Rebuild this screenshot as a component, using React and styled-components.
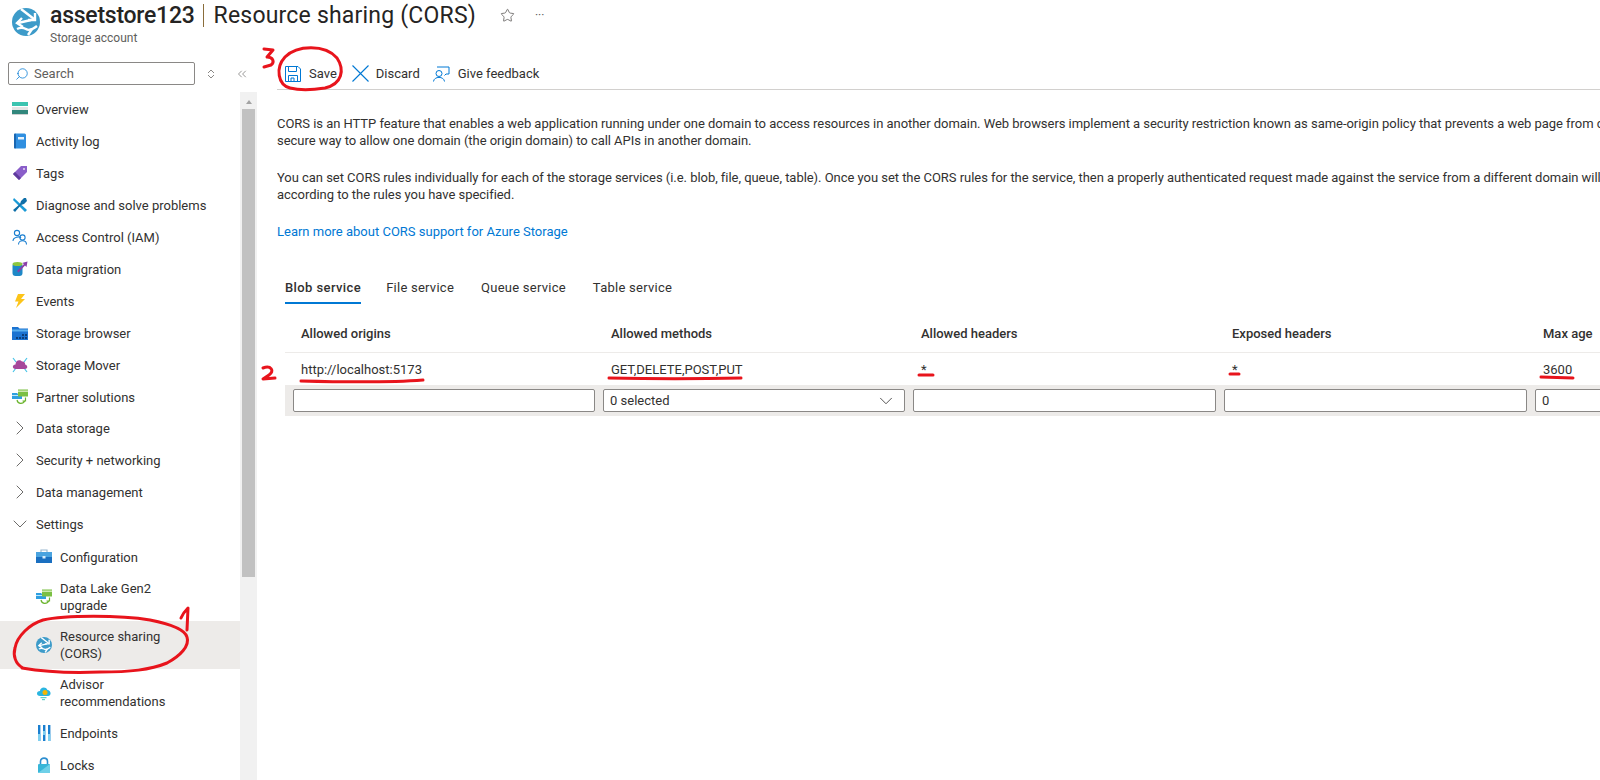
import React from 'react';
import styled, { createGlobalStyle } from 'styled-components';
import { ChevronRight, ChevronDown, ChevronsLeft, Star, Search as SearchGlyph } from 'lucide-react';

const Global = createGlobalStyle`
  html, body { margin: 0; padding: 0; height: 100%; background: #fff; overflow: hidden; }
  body { font-family: Roboto, "Liberation Sans", sans-serif; color: #323130; font-size: 13px; }
`;

const Page = styled.div`
  position: relative;
  width: 1600px;
  height: 780px;
  overflow: hidden;
`;
const Header = styled.header`
  display: flex;
  height: 52px;
  padding: 0 0 0 12px;
  gap: 10px;
`;
const LogoSlot = styled.div`
  padding-top: 8px;
`;
const HeaderText = styled.div`
  display: flex;
  flex-direction: column;
`;
const TitleRow = styled.div`
  display: flex;
  align-items: center;
  height: 30px;
  font-size: 23px;
  color: #252423;
`;
const TitleBold = styled.b`
  font-weight: 500;
  letter-spacing: -0.25px;
`;
const Divider = styled.span`
  width: 1px;
  height: 23px;
  margin: 0 10px 0 8px;
  background: #8a6d3b;
`;
const TitleRest = styled.span`
  letter-spacing: 0.2px;
`;
const HeaderTools = styled.span`
  display: flex;
  align-items: center;
  gap: 20px;
  margin-left: 24px;
  color: #605e5c;
`;
const Dots = styled.span`
  font-size: 12px;
  line-height: 10px;
`;
const Subtitle = styled.div`
  font-size: 12px;
  color: #605e5c;
  line-height: 16px;
`;
const Body = styled.div`
  display: flex;
`;
const Side = styled.aside`
  width: 277px;
  flex: none;
`;
const SearchRow = styled.div`
  display: flex;
  align-items: center;
  height: 40px;
  padding: 3px 0 0 8px;
  box-sizing: border-box;
`;
const SearchBox = styled.div`
  display: flex;
  align-items: center;
  gap: 5px;
  width: 187px;
  height: 23px;
  padding-left: 6px;
  box-sizing: border-box;
  border: 1px solid #8a8886;
  border-radius: 2px;
  color: #605e5c;
`;
const SideTools = styled.div`
  display: flex;
  align-items: center;
  gap: 20px;
  margin-left: 12px;
  color: #605e5c;
`;
const SideBody = styled.div`
  display: flex;
  height: 688px;
`;
const Nav = styled.nav`
  width: 240px;
  flex: none;
  padding-top: 1px;
`;
const NavItem = styled.div`
  display: flex;
  align-items: center;
  gap: 8px;
  min-height: ${p => (p.$tall ? 48 : 32)}px;
  padding-left: ${p => (p.$sub ? 36 : 12)}px;
  background: ${p => (p.$active ? '#edebe9' : 'transparent')};
  line-height: 17px;
  color: #323130;
`;
const Groups = styled.div`
  margin: -1px 0 1px;
`;
const IconSlot = styled.span`
  display: flex;
  justify-content: center;
  align-items: center;
  width: 16px;
  flex: none;
  svg { flex: none; }
`;
const NavIcon = styled.svg`
  width: 16px;
  height: 16px;
  flex: none;
`;
const Track = styled.div`
  width: 17px;
  flex: none;
  background: #f1f1f1;
  display: flex;
  flex-direction: column;
  align-items: center;
`;
const ScrollUp = styled.div`
  width: 0;
  height: 0;
  margin: 8px 0 5px;
  border-left: 3.5px solid transparent;
  border-right: 3.5px solid transparent;
  border-bottom: 4px solid #a3a3a3;
`;
const Thumb = styled.div`
  width: 13px;
  height: 468px;
  background: #c1c1c1;
`;
const Main = styled.main`
  flex: 1;
  min-width: 0;
  overflow: hidden;
`;
const Toolbar = styled.div`
  display: flex;
  align-items: center;
  height: 38px;
  padding: 6px 0 0 8px;
  box-sizing: border-box;
  gap: 15px;
  border-bottom: 1px solid #d2d0ce;
`;
const ToolButton = styled.span`
  display: flex;
  align-items: center;
  gap: ${p => p.$gap || 8}px;
  margin-right: ${p => p.$pull || 0}px;
  color: #323130;
`;
const Copy = styled.div`
  padding-top: 25px;
`;
const Intro = styled.p`
  margin: 0 0 20px;
  line-height: 17px;
  white-space: nowrap;
  letter-spacing: -0.04px;
`;
const LearnLink = styled.a`
  display: block;
  color: #0078d4;
  line-height: 17px;
`;
const Tabs = styled.div`
  display: flex;
  margin: 35px 0 0 8px;
  gap: 27px;
`;
const Tab = styled.div`
  height: 29px;
  line-height: 26px;
  box-sizing: border-box;
  font-weight: ${p => (p.$active ? 500 : 400)};
  letter-spacing: ${p => (p.$active ? 0.4 : 0.25)}px;
  margin-right: ${p => (p.$active ? -2 : 0)}px;
  border-bottom: 2px solid ${p => (p.$active ? '#0078d4' : 'transparent')};
`;
const Table = styled.div`
  margin: 10px 0 0 8px;
  width: 1400px;
`;
const Columns = styled.div`
  display: grid;
  grid-template-columns: 310px 310px 311px 311px 1fr;
  height: ${p => p.$h}px;
  box-sizing: border-box;
  align-items: center;
  background: ${p => p.$bg || 'transparent'};
  border-bottom: ${p => (p.$line ? '1px solid #edebe9' : 'none')};
`;
const HeadCell = styled.div`
  padding-left: 16px;
  font-weight: 500;
`;
const Cell = styled.div`
  padding-left: 16px;
`;
const InputCell = styled.div`
  padding-left: 8px;
`;
const FakeInput = styled.div`
  display: flex;
  align-items: center;
  justify-content: space-between;
  height: 23px;
  box-sizing: border-box;
  padding: 0 7px 0 6px;
  background: #fff;
  border: 1px solid #8a8886;
  border-radius: 2px;
`;
const Ink = styled.svg`
  position: absolute;
  left: 0;
  top: 0;
  width: 1600px;
  height: 780px;
  pointer-events: none;
`;

const Cors = ({ size = 16 }) => (
  <svg width={size} height={size} viewBox="0 0 28 28">
    <circle cx="14" cy="14" r="14" fill="#3d9bc9" />
    <g fill="none" stroke="#fff" strokeWidth="2.4" strokeLinejoin="miter">
      <path d="M9 1 L22 11" />
      <path d="M23 5 L23 12 L16 12" />
      <path d="M19 12 L6 15" />
      <path d="M10 10 L5 15 L11 19" />
      <path d="M5 21 C9 19 12 20 14 21 C17 23 20 22 25 18" />
      <path d="M16 27 L20 21" />
    </g>
  </svg>
);

const icons = {
  overview: (
    <NavIcon viewBox="0 0 16 16">
      <rect y="1" width="16" height="4" fill="#3cc4b0" />
      <rect y="6" width="16" height="3" fill="#e4e4e4" />
      <rect y="9" width="16" height="4" fill="#32877c" />
      <rect y="13" width="16" height="1" fill="#cfcfcf" />
    </NavIcon>
  ),
  log: (
    <NavIcon viewBox="0 0 16 16">
      <rect x="2" y="0.5" width="12" height="15" rx="1.5" fill="#2f8fe0" />
      <rect x="2" y="0.5" width="2" height="15" rx="1" fill="#1a66b0" />
      <rect x="6" y="4" width="6" height="2.5" fill="#e6f2fb" />
    </NavIcon>
  ),
  tags: (
    <NavIcon viewBox="0 0 16 16">
      <path d="M1 9 L9 1 L15 1 L15 7 L7 15 Z" fill="#8a5ec9" />
      <path d="M1 9 L7 15 L9 13 L3 7 Z" fill="#5e3a9c" />
      <circle cx="12" cy="4" r="1" fill="#e8dcf7" />
    </NavIcon>
  ),
  tools: (
    <NavIcon viewBox="0 0 16 16">
      <path d="M2 1 L15 13 L13 15 L1 3 Z" fill="#1a9ad6" />
      <path d="M14 1 L15 4 L12 7 L9 8 L3 15 L1 13 L8 7 L9 4 L12 1 Z" fill="#0f6fa8" />
    </NavIcon>
  ),
  iam: (
    <NavIcon viewBox="0 0 16 16" fill="none" stroke="#1a7fd0" strokeWidth="1.1">
      <circle cx="5" cy="4" r="2.6" />
      <path d="M1 12 C1 8 8 7 9 9" />
      <circle cx="10.5" cy="8.5" r="2.6" />
      <path d="M6.5 15.5 C6.5 10.5 14.5 10.5 14.5 15.5" />
    </NavIcon>
  ),
  migration: (
    <NavIcon viewBox="0 0 16 16">
      <rect x="0.5" y="2" width="10" height="13" rx="3" fill="#1e88c7" />
      <ellipse cx="5.5" cy="3" rx="5" ry="2" fill="#8cc63f" />
      <path d="M5 10 L12 3 L10 2 L15.5 0.5 L14.5 6 L13 4.5 L6.5 11.5 Z" fill="#8a3fa8" />
    </NavIcon>
  ),
  events: (
    <NavIcon viewBox="0 0 16 16">
      <path d="M6 1 L13 1 L9 6 L13 6 L4 15 L6.5 8.5 L3 8.5 Z" fill="#fcc419" />
    </NavIcon>
  ),
  browser: (
    <NavIcon viewBox="0 0 16 16">
      <path d="M0 2 L6 2 L7.5 3.5 L16 3.5 L16 15 L0 15 Z" fill="#1b73d1" />
      <rect y="4.5" width="16" height="2" fill="#5ab0ee" />
      <rect x="4" y="12" width="2" height="2" fill="#0d3f7a" />
      <rect x="7" y="12" width="2" height="2" fill="#0d3f7a" />
      <rect x="10" y="12" width="2" height="2" fill="#0d3f7a" />
      <rect x="13" y="12" width="2" height="2" fill="#0d3f7a" />
      <rect x="10" y="9" width="2" height="2" fill="#0d3f7a" />
      <rect x="13" y="9" width="2" height="2" fill="#0d3f7a" />
    </NavIcon>
  ),
  mover: (
    <NavIcon viewBox="0 0 16 16">
      <path d="M1 1 L4 5 M15 1 L12 5 M1 15 L4 11 M15 15 L12 11" stroke="#48c4e8" strokeWidth="1.2" />
      <path d="M3.5 12 C0 12 0 7.5 3.5 7.5 C3.5 3 8 2 10 4.5 C12 4 13.5 6 13 7.5 C16 8 16 12 13 12 Z" fill="#a6479a" />
    </NavIcon>
  ),
  partner: (
    <NavIcon viewBox="0 0 16 16">
      <path d="M0 4 L5 4 L6 5 L10 5 L10 10 L0 10 Z" fill="#2e9fe0" />
      <rect y="6" width="10" height="1" fill="#bfe6fa" />
      <rect x="6" y="0.5" width="10" height="7" fill="#7bc043" />
      <rect x="6" y="1.5" width="10" height="1.5" fill="#cfe8b0" />
      <path d="M5 11 C6 15.5 11 15.5 13 11.5 M13.5 8.5 L13.5 12 L10.5 12" fill="none" stroke="#6ab42d" strokeWidth="1.2" />
    </NavIcon>
  ),
  config: (
    <NavIcon viewBox="0 0 16 16">
      <path d="M5 3 L5 1 L11 1 L11 3" fill="none" stroke="#9ab8cf" strokeWidth="1.2" />
      <rect y="3" width="16" height="5" fill="#4aa3df" />
      <rect y="8" width="16" height="6" fill="#1a6fc0" />
      <rect x="6.5" y="7" width="3" height="2.5" fill="#d8eefc" />
    </NavIcon>
  ),
  advisor: (
    <NavIcon viewBox="0 0 16 16">
      <path d="M4 11 C0 11 0 6 4 6 C4 2 10 1 11.5 5 C15 5 16 11 12 11 Z" fill="#2ab5e0" />
      <circle cx="9" cy="7.5" r="2.5" fill="#f5b700" />
      <rect x="4.5" y="12" width="6" height="1.2" fill="#5fd0c8" />
      <rect x="6" y="14" width="3" height="1.2" fill="#5fd0c8" />
    </NavIcon>
  ),
  endpoints: (
    <NavIcon viewBox="0 0 16 16">
      <rect x="2" y="0" width="2.4" height="16" fill="#1a7fd0" />
      <rect x="7" y="0" width="2.4" height="16" fill="#1a7fd0" />
      <rect x="12" y="0" width="2.4" height="16" fill="#1a7fd0" />
      <rect x="2" y="9" width="2.4" height="7" fill="#7fd0f0" />
      <rect x="7" y="6" width="2.4" height="4" fill="#7fd0f0" />
      <rect x="12" y="9" width="2.4" height="7" fill="#7fd0f0" />
    </NavIcon>
  ),
  locks: (
    <NavIcon viewBox="0 0 16 16">
      <path d="M4.5 7 L4.5 4.5 C4.5 0 11.5 0 11.5 4.5 L11.5 7" fill="none" stroke="#2f8fd0" strokeWidth="1.6" />
      <rect x="2" y="7" width="12" height="9" rx="1" fill="#38b6d8" />
      <path d="M2 16 L14 7 L14 16 Z" fill="#6fd0e8" />
    </NavIcon>
  ),
};

const topItems = [
  ['overview', 'Overview'],
  ['log', 'Activity log'],
  ['tags', 'Tags'],
  ['tools', 'Diagnose and solve problems'],
  ['iam', 'Access Control (IAM)'],
  ['migration', 'Data migration'],
  ['events', 'Events'],
  ['browser', 'Storage browser'],
  ['mover', 'Storage Mover'],
  ['partner', 'Partner solutions'],
];

const groups = ['Data storage', 'Security + networking', 'Data management'];

export default function App() {
  return (
    <Page>
      <Global />
      <Header>
        <LogoSlot><Cors size={28} /></LogoSlot>
        <HeaderText>
          <TitleRow>
            <TitleBold>assetstore123</TitleBold>
            <Divider />
            <TitleRest>Resource sharing (CORS)</TitleRest>
            <HeaderTools>
              <Star size={15} strokeWidth={1.3} />
              <Dots>···</Dots>
            </HeaderTools>
          </TitleRow>
          <Subtitle>Storage account</Subtitle>
        </HeaderText>
      </Header>
      <Body>
        <Side>
          <SearchRow>
            <SearchBox>
              <SearchGlyph size={14} color="#0078d4" strokeWidth={1.3} style={{ transform: 'scaleX(-1)' }} />
              Search
            </SearchBox>
            <SideTools>
              <svg width="8" height="10" viewBox="0 0 8 10" fill="none" stroke="#8a8886"><path d="M1 4 L4 1 L7 4 M1 6 L4 9 L7 6" /></svg>
              <ChevronsLeft size={14} strokeWidth={1.1} />
            </SideTools>
          </SearchRow>
          <SideBody>
            <Nav>
              {topItems.map(([key, label]) => (
                <NavItem key={key}>{icons[key]}<span>{label}</span></NavItem>
              ))}
              <Groups>
                {groups.map(label => (
                  <NavItem key={label}>
                    <IconSlot><ChevronRight size={24} strokeWidth={0.8} color="#484644" /></IconSlot>
                    <span>{label}</span>
                  </NavItem>
                ))}
                <NavItem>
                  <IconSlot><ChevronDown size={24} strokeWidth={0.8} color="#484644" /></IconSlot>
                  <span>Settings</span>
                </NavItem>
              </Groups>
              <NavItem $sub>{icons.config}<span>Configuration</span></NavItem>
              <NavItem $sub $tall>{icons.partner}<span>Data Lake Gen2<br />upgrade</span></NavItem>
              <NavItem $sub $tall $active><Cors /><span>Resource sharing<br />(CORS)</span></NavItem>
              <NavItem $sub $tall>{icons.advisor}<span>Advisor<br />recommendations</span></NavItem>
              <NavItem $sub>{icons.endpoints}<span>Endpoints</span></NavItem>
              <NavItem $sub>{icons.locks}<span>Locks</span></NavItem>
            </Nav>
            <Track>
              <ScrollUp />
              <Thumb />
            </Track>
          </SideBody>
        </Side>
        <Main>
          <Toolbar>
            <ToolButton>
              <svg width="16" height="16" viewBox="0 0 16 16" fill="none" stroke="#0078d4"><path d="M0.5 0.5 H13 L15.5 3 V15.5 H0.5 Z M3.5 0.5 V5.5 H11.5 V0.5 M3.5 15.5 V9.5 H12.5 V15.5 M6 15.5 V12 H9 V15.5" /></svg>
              Save
            </ToolButton>
            <ToolButton $pull={-2} $gap={7}>
              <svg width="17" height="17" viewBox="0 0 17 17" fill="none" stroke="#0078d4" strokeWidth="1.1"><path d="M0.5 0.5 L16.5 16.5 M16.5 0.5 L0.5 16.5" /></svg>
              Discard
            </ToolButton>
            <ToolButton>
              <svg width="17" height="16" viewBox="0 0 17 16" fill="none" stroke="#0078d4"><circle cx="6" cy="7.5" r="3" /><path d="M0.5 15.5 C1 10 11 10 11.5 15.5 M4 1 H16 V8 H13 L11.5 9.5" /></svg>
              Give feedback
            </ToolButton>
          </Toolbar>
          <Copy>
            <Intro>
              CORS is an HTTP feature that enables a web application running under one domain to access resources in another domain. Web browsers implement a security restriction known as same-origin policy that prevents a web page from calling APIs in a different domain; CORS provides a<br />
              secure way to allow one domain (the origin domain) to call APIs in another domain.
            </Intro>
            <Intro>
              You can set CORS rules individually for each of the storage services (i.e. blob, file, queue, table). Once you set the CORS rules for the service, then a properly authenticated request made against the service from a different domain will be evaluated to determine whether it is allowed<br />
              according to the rules you have specified.
            </Intro>
            <LearnLink>Learn more about CORS support for Azure Storage</LearnLink>
          </Copy>
          <Tabs>
            <Tab $active>Blob service</Tab>
            <Tab>File service</Tab>
            <Tab>Queue service</Tab>
            <Tab>Table service</Tab>
          </Tabs>
          <Table>
            <Columns $h={39} $line>
              <HeadCell>Allowed origins</HeadCell>
              <HeadCell>Allowed methods</HeadCell>
              <HeadCell>Allowed headers</HeadCell>
              <HeadCell>Exposed headers</HeadCell>
              <HeadCell>Max age</HeadCell>
            </Columns>
            <Columns $h={32}>
              <Cell>http://localhost:5173</Cell>
              <Cell>GET,DELETE,POST,PUT</Cell>
              <Cell>*</Cell>
              <Cell>*</Cell>
              <Cell>3600</Cell>
            </Columns>
            <Columns $h={31} $bg="#edebe9">
              <InputCell><FakeInput /></InputCell>
              <InputCell><FakeInput>0 selected<ChevronDown size={22} strokeWidth={0.9} /></FakeInput></InputCell>
              <InputCell><FakeInput /></InputCell>
              <InputCell><FakeInput /></InputCell>
              <InputCell><FakeInput>0</FakeInput></InputCell>
            </Columns>
          </Table>
        </Main>
      </Body>
      <Ink viewBox="0 0 1600 780" fill="none" stroke="#e8141c" strokeWidth="3" strokeLinecap="round" strokeLinejoin="round">
        <path d="M23 668 C15 664 13 655 15 648 C17 636 30 624 43 620 C65 615 120 615 150 620 C170 624 185 630 187 637 C190 646 180 656 167 663 C150 670 130 672 100 672 C75 673 45 672 22 668" />
        <path d="M181 618 C183 613 186 610 188 608 L187 630" />
        <path d="M290 88 C278 85 275 68 285 57 C297 45 325 44 337 58 C345 70 342 84 325 88 C312 90 298 90 290 88" />
        <path d="M264 49 L273 50 L267 57 C273 57 275 62 271 65 L264 67" />
        <path d="M263 368 C271 365 275 371 269 375 L263 379 L275 378" />
        <path d="M301 381 C340 382 385 383 423 380" />
        <path d="M609 378 C650 379 700 379 741 378" />
        <path d="M919 375 L933 375" />
        <path d="M1230 374 L1239 374" />
        <path d="M1541 377 L1573 378" />
      </Ink>
    </Page>
  );
}
